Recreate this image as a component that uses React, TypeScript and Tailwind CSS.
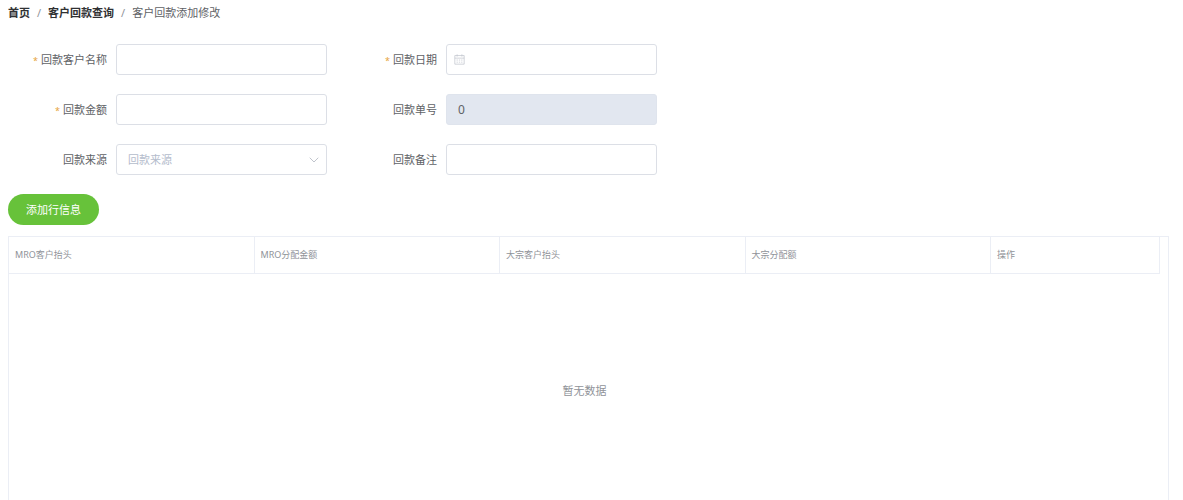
import { useState, type ReactNode } from 'react';

const COLUMNS = [
  { title: 'MRO客户抬头', className: 'w-[21.33%]' },
  { title: 'MRO分配金额', className: 'w-[21.33%]' },
  { title: '大宗客户抬头', className: 'w-[21.33%]' },
  { title: '大宗分配额', className: 'w-[21.33%]' },
  { title: '操作', className: '' },
];

const inputClass =
  'h-[31px] w-full rounded-[3px] border border-[#dcdfe6] bg-white px-[11px] text-[11px] outline-none focus:border-[#409eff]';

function CalendarIcon() {
  return (
    <svg
      viewBox="0 0 12 12"
      fill="none"
      stroke="currentColor"
      strokeWidth="0.8"
      className="pointer-events-none absolute top-[10px] left-2 size-[11px] text-[#c0c4cc]"
    >
      <path d="M0.9 1.7h10.2v9.4H0.9zM0.9 4.5h10.2M3.4 0.4v2.4M8.6 0.4v2.4" />
      <path d="M2.8 6.6h1.4M5.3 6.6h1.4M7.8 6.6h1.4M2.8 8.9h1.4M5.3 8.9h1.4M7.8 8.9h1.4" />
    </svg>
  );
}

function ArrowDownIcon() {
  return (
    <svg
      viewBox="0 0 12 12"
      fill="none"
      stroke="currentColor"
      strokeLinecap="round"
      strokeLinejoin="round"
      className="pointer-events-none absolute top-[10px] right-[7px] size-3 text-[#c0c4cc]"
    >
      <path d="M2 4l4 4 4-4" />
    </svg>
  );
}

type FieldProps = {
  id: string;
  label: string;
  required?: boolean;
  children: ReactNode;
};

function Field({ id, label, required, children }: FieldProps) {
  return (
    <div className="flex items-center">
      <label htmlFor={id} className="w-[108px] shrink-0 pt-0.5 pr-[9px] text-right text-[11px] text-[#606266]">
        {required && <span className="mr-[3px] text-[9px] text-[#e6a23c]">*</span>}
        {label}
      </label>
      <div className="relative min-w-0 flex-1">{children}</div>
    </div>
  );
}

export default function App() {
  const [customer, setCustomer] = useState('');
  const [date, setDate] = useState('');
  const [amount, setAmount] = useState('');
  const [source, setSource] = useState('');
  const [remark, setRemark] = useState('');

  return (
    <main className="h-screen overflow-hidden bg-white pr-[14px] pl-2 font-['Noto_Sans','Noto_Sans_CJK_SC',sans-serif] text-[11px] text-[#606266]">
      <nav className="flex h-[25px] items-center pt-0.5">
        <a href="#home" className="font-bold text-[#303133]">
          首页
        </a>
        <span className="mx-[7px] text-[#909399]">/</span>
        <a href="#payments" className="font-bold text-[#303133]">
          客户回款查询
        </a>
        <span className="mx-[7px] text-[#909399]">/</span>
        <span>客户回款添加修改</span>
      </nav>

      <form className="mt-[19px] grid max-w-[649px] grid-cols-2 gap-x-[11px] gap-y-[19px]">
        <Field id="customer" label="回款客户名称" required>
          <input
            id="customer"
            className={inputClass}
            value={customer}
            onChange={(e) => setCustomer(e.target.value)}
          />
        </Field>
        <Field id="date" label="回款日期" required>
          <input
            id="date"
            className={`${inputClass} pl-6`}
            value={date}
            onChange={(e) => setDate(e.target.value)}
          />
          <CalendarIcon />
        </Field>
        <Field id="amount" label="回款金额" required>
          <input
            id="amount"
            className={inputClass}
            value={amount}
            onChange={(e) => setAmount(e.target.value)}
          />
        </Field>
        <Field id="orderNo" label="回款单号">
          <input
            id="orderNo"
            readOnly
            value="0"
            className="h-[31px] w-full rounded-[3px] border border-[#dfe4ed] bg-[#e2e7f0] px-[11px] text-[12px] text-[#606266] outline-none"
          />
        </Field>
        <Field id="source" label="回款来源">
          <select
            id="source"
            className={`${inputClass} appearance-none pt-0.5 ${source ? '' : 'text-[#b4bccc]'}`}
            value={source}
            onChange={(e) => setSource(e.target.value)}
          >
            <option value="" disabled hidden>
              回款来源
            </option>
          </select>
          <ArrowDownIcon />
        </Field>
        <Field id="remark" label="回款备注">
          <input
            id="remark"
            className={inputClass}
            value={remark}
            onChange={(e) => setRemark(e.target.value)}
          />
        </Field>
      </form>

      <button
        type="button"
        className="mt-[19px] block h-[31px] rounded-full bg-[#67c23a] px-[18px] pt-0.5 text-[11px] text-white hover:bg-[#85ce61]"
      >
        添加行信息
      </button>

      {/* the strip on the right is the scrollbar gutter */}
      <div className="mt-[11px] border border-[#ebeef5] pr-2">
        <table className="w-full table-fixed border-separate border-spacing-0">
          <thead>
            <tr>
              {COLUMNS.map((col) => (
                <th
                  key={col.title}
                  className={`h-[37px] border-r border-b border-[#ebeef5] px-[6px] text-left text-[9px] font-normal text-[#909399] ${col.className}`}
                >
                  {col.title}
                </th>
              ))}
            </tr>
          </thead>
          <tbody>
            <tr>
              <td colSpan={COLUMNS.length} className="h-[232px] pt-0.5 text-center text-[11px] text-[#909399]">
                暂无数据
              </td>
            </tr>
          </tbody>
        </table>
      </div>
    </main>
  );
}
